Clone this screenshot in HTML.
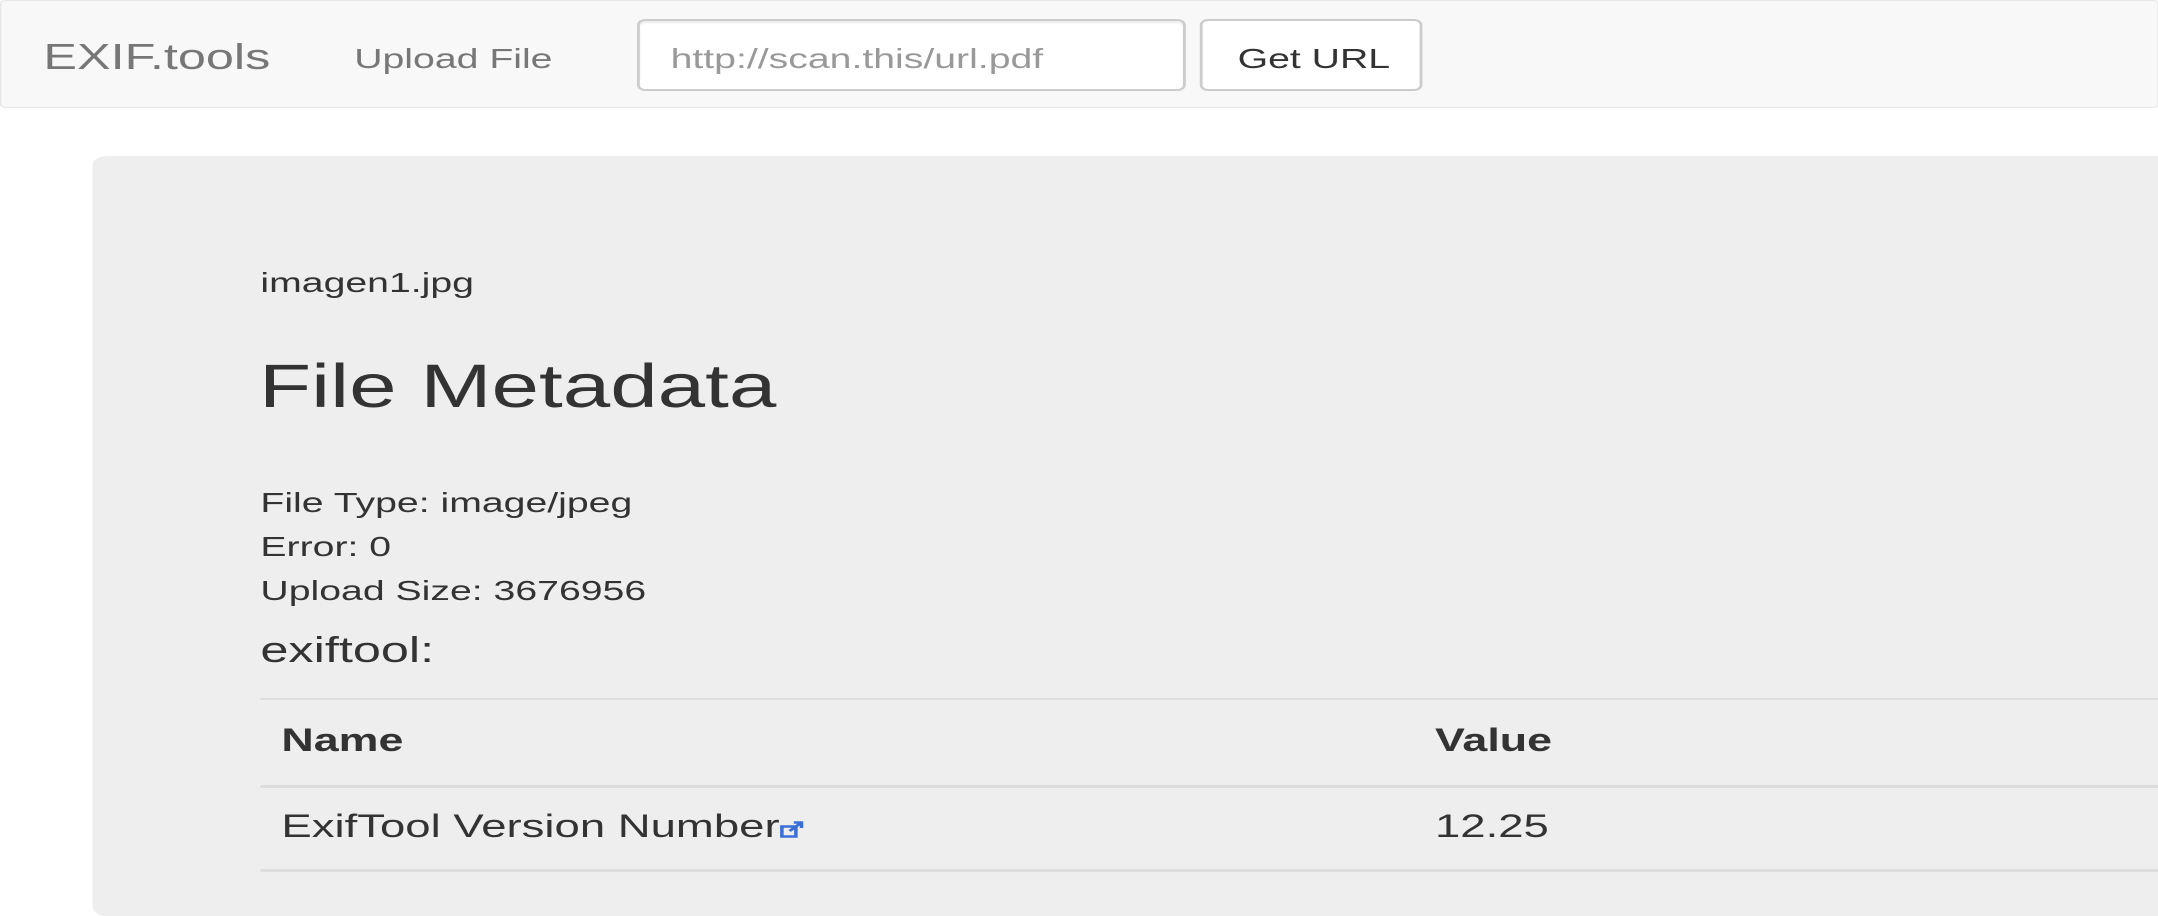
<!DOCTYPE html>
<html><head><meta charset="utf-8"><style>
html,body{margin:0;padding:0;background:#fff;overflow:hidden;width:2158px;height:888px}
#w{position:absolute;left:0;top:0;width:1542px;height:888px;transform:scaleX(1.4);transform-origin:0 0;font-family:"Liberation Sans",Arial,sans-serif;color:#333}
.t{position:absolute;white-space:nowrap;line-height:1.15}
.nav{position:absolute;left:0;top:0;width:1542px;height:108px;background:#f8f8f8;border:1px solid #e7e7e7;box-sizing:border-box;border-radius:4px}
.inp{position:absolute;left:455px;top:19px;width:392px;height:72px;background:#fff;border:2px solid #ccc;border-radius:6px;box-sizing:border-box;box-shadow:inset 0 2px 2px rgba(0,0,0,.08)}
.btn{position:absolute;left:857px;top:19px;width:159px;height:72px;background:#fff;border:2px solid #ccc;border-radius:6px;box-sizing:border-box}
.panel{position:absolute;left:66px;top:156px;width:1500px;height:760px;background:#eee;border-radius:10px}
.hr{position:absolute;left:186px;width:1400px;height:2px;background:#ddd}
</style></head><body><div id="w">
<div class="nav"></div>
<div class="t" style="left:31px;top:36px;font-size:36px;color:#777">EXIF.tools</div>
<div class="t" style="left:253px;top:43px;font-size:28px;color:#777">Upload File</div>
<div class="inp"></div>
<div class="t" style="left:479px;top:43px;font-size:28px;color:#999">http://scan.this/url.pdf</div>
<div class="btn"></div>
<div class="t" style="left:884px;top:43px;font-size:28px;color:#333">Get URL</div>
<div class="panel"></div>
<div class="t" style="left:186px;top:267px;font-size:28px">imagen1.jpg</div>
<div class="t" style="left:185px;top:351px;font-size:61px">File Metadata</div>
<div class="t" style="left:186px;top:487px;font-size:28px">File Type: image/jpeg</div>
<div class="t" style="left:186px;top:531px;font-size:28px">Error: 0</div>
<div class="t" style="left:186px;top:575px;font-size:28px">Upload Size: 3676956</div>
<div class="t" style="left:186px;top:629px;font-size:36px">exiftool:</div>
<div class="hr" style="top:698px"></div>
<div class="t" style="left:201px;top:722px;font-size:32px;font-weight:bold">Name</div>
<div class="t" style="left:1025px;top:722px;font-size:32px;font-weight:bold">Value</div>
<div class="hr" style="top:785px;height:3px"></div>
<div class="t" style="left:201px;top:808px;font-size:32.5px">ExifTool Version Number<svg width="18" height="18" viewBox="0 0 18 18" style="vertical-align:-1px"><rect x="1.5" y="6.5" width="10" height="10" fill="none" stroke="#3a6fd8" stroke-width="2.5"/><path d="M7 11 L15 3 M10 2.5 H15.5 V8" fill="none" stroke="#3a6fd8" stroke-width="2.5"/></svg></div>
<div class="t" style="left:1025px;top:808px;font-size:32.5px">12.25</div>
<div class="hr" style="top:869px;height:3px"></div>
</div></body></html>
